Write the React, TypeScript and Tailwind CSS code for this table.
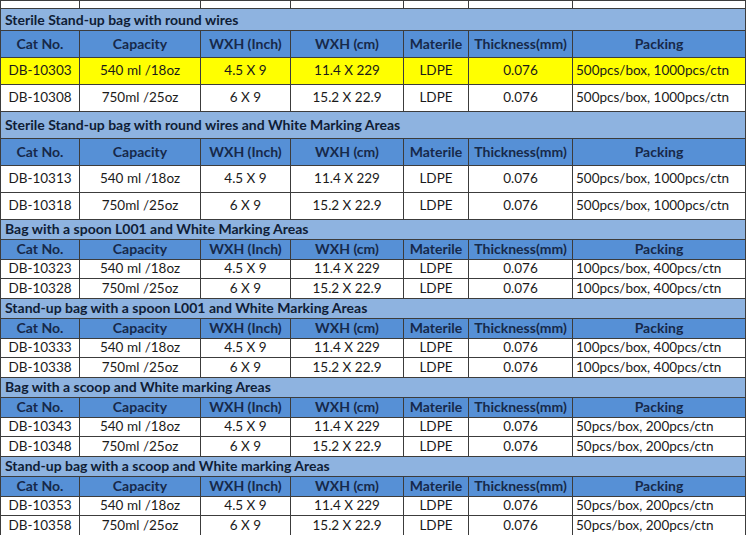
const sections = [
  {
    title: "Sterile Stand-up bag with round wires",
    big: true,
    rows: [
      ["DB-10303", "540 ml /18oz", "4.5 X 9", "11.4 X 229", "LDPE", "0.076", "500pcs/box, 1000pcs/ctn"],
      ["DB-10308", "750ml /25oz", "6 X 9", "15.2 X 22.9", "LDPE", "0.076", "500pcs/box, 1000pcs/ctn"],
    ],
  },
  {
    title: "Sterile Stand-up bag with round wires and White Marking Areas",
    big: true,
    rows: [
      ["DB-10313", "540 ml /18oz", "4.5 X 9", "11.4 X 229", "LDPE", "0.076", "500pcs/box, 1000pcs/ctn"],
      ["DB-10318", "750ml /25oz", "6 X 9", "15.2 X 22.9", "LDPE", "0.076", "500pcs/box, 1000pcs/ctn"],
    ],
  },
  {
    title: "Bag with a spoon L001 and White Marking Areas",
    big: false,
    rows: [
      ["DB-10323", "540 ml /18oz", "4.5 X 9", "11.4 X 229", "LDPE", "0.076", "100pcs/box, 400pcs/ctn"],
      ["DB-10328", "750ml /25oz", "6 X 9", "15.2 X 22.9", "LDPE", "0.076", "100pcs/box, 400pcs/ctn"],
    ],
  },
  {
    title: "Stand-up bag with a spoon L001 and White Marking Areas",
    big: false,
    rows: [
      ["DB-10333", "540 ml /18oz", "4.5 X 9", "11.4 X 229", "LDPE", "0.076", "100pcs/box, 400pcs/ctn"],
      ["DB-10338", "750ml /25oz", "6 X 9", "15.2 X 22.9", "LDPE", "0.076", "100pcs/box, 400pcs/ctn"],
    ],
  },
  {
    title: "Bag with a scoop and White marking Areas",
    big: false,
    rows: [
      ["DB-10343", "540 ml /18oz", "4.5 X 9", "11.4 X 229", "LDPE", "0.076", "50pcs/box, 200pcs/ctn"],
      ["DB-10348", "750ml /25oz", "6 X 9", "15.2 X 22.9", "LDPE", "0.076", "50pcs/box, 200pcs/ctn"],
    ],
  },
  {
    title: "Stand-up bag with a scoop and White marking Areas",
    big: false,
    rows: [
      ["DB-10353", "540 ml /18oz", "4.5 X 9", "11.4 X 229", "LDPE", "0.076", "50pcs/box, 200pcs/ctn"],
      ["DB-10358", "750ml /25oz", "6 X 9", "15.2 X 22.9", "LDPE", "0.076", "50pcs/box, 200pcs/ctn"],
    ],
  },
];

const heads = ["Cat No.", "Capacity", "WXH (Inch)", "WXH (cm)", "Materile", "Thickness(mm)", "Packing"];
const widths = ["w-[79px]", "w-[121px]", "w-[90px]", "w-[113px]", "w-[65px]", "w-[104px]", "w-[173px]"];

const cell = "border border-[#3c3c3c] p-0 leading-none";

export default function App() {
  return (
    <div className="h-[535px] w-[747px] overflow-hidden bg-white font-['Lato',sans-serif] text-[13.5px] text-[#1a1a1a]">
      <table className="w-[745px] table-fixed border-collapse">
        <colgroup>
          {widths.map((w) => (
            <col key={w} className={w} />
          ))}
        </colgroup>
        <tbody>
          <tr className="h-[8px]">
            {widths.map((w) => (
              <td key={w} className={cell} />
            ))}
          </tr>
          {sections.map((s, si) => {
            const h = s.big ? "h-[27px]" : "h-[19.75px]";
            return [
              <tr key={`t${si}`} className={si === 0 ? "h-[22px]" : h}>
                <td colSpan={7} className={`${cell} bg-[#8eb3e0] pl-[4px] text-left text-[14px] font-bold text-[#0f1d36]`}>
                  {s.title}
                </td>
              </tr>,
              <tr key={`h${si}`} className={h}>
                {heads.map((hd) => (
                  <td key={hd} className={`${cell} bg-[#5690d6] text-center text-[14px] font-bold text-[#16294a]`}>
                    {hd}
                  </td>
                ))}
              </tr>,
              ...s.rows.map((r, ri) => (
                <tr key={`r${si}-${ri}`} className={`${h} ${si === 0 && ri === 0 ? "bg-[#ffff00]" : "bg-white"}`}>
                  {r.map((v, ci) => (
                    <td key={ci} className={`${cell} ${ci === 6 ? "pl-[3px] text-left" : "text-center"}`}>
                      {v}
                    </td>
                  ))}
                </tr>
              )),
            ];
          })}
        </tbody>
      </table>
    </div>
  );
}
